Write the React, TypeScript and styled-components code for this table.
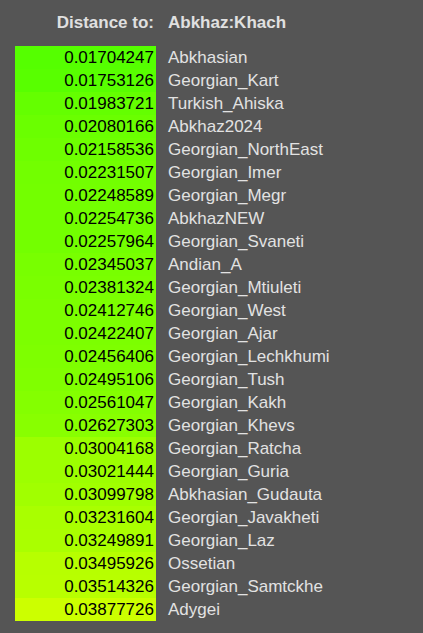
import React from "react";
import styled, { createGlobalStyle } from "styled-components";

const Global = createGlobalStyle`
  html, body { margin: 0; padding: 0; background: #555555; }
  body { font-family: "Liberation Sans", Arial, sans-serif; }
`;

const rows: [string, string][] = [
  ["0.01704247", "Abkhasian"],
  ["0.01753126", "Georgian_Kart"],
  ["0.01983721", "Turkish_Ahiska"],
  ["0.02080166", "Abkhaz2024"],
  ["0.02158536", "Georgian_NorthEast"],
  ["0.02231507", "Georgian_Imer"],
  ["0.02248589", "Georgian_Megr"],
  ["0.02254736", "AbkhazNEW"],
  ["0.02257964", "Georgian_Svaneti"],
  ["0.02345037", "Andian_A"],
  ["0.02381324", "Georgian_Mtiuleti"],
  ["0.02412746", "Georgian_West"],
  ["0.02422407", "Georgian_Ajar"],
  ["0.02456406", "Georgian_Lechkhumi"],
  ["0.02495106", "Georgian_Tush"],
  ["0.02561047", "Georgian_Kakh"],
  ["0.02627303", "Georgian_Khevs"],
  ["0.03004168", "Georgian_Ratcha"],
  ["0.03021444", "Georgian_Guria"],
  ["0.03099798", "Abkhasian_Gudauta"],
  ["0.03231604", "Georgian_Javakheti"],
  ["0.03249891", "Georgian_Laz"],
  ["0.03495926", "Ossetian"],
  ["0.03514326", "Georgian_Samtckhe"],
  ["0.03877726", "Adygei"],
];

const Page = styled.div`
  padding: 11px 0 0 15px;
  color: #e2e2e2;
  font-size: 17px;
  line-height: 23px;
`;

const Grid = styled.div`
  display: grid;
  grid-template-columns: 141px auto;
  column-gap: 12px;
  justify-content: start;
`;

const HeadCell = styled.div<{ $right?: boolean }>`
  font-weight: bold;
  text-align: ${(p) => (p.$right ? "right" : "left")};
  padding-right: ${(p) => (p.$right ? "2px" : "0")};
  margin-bottom: 12px;
  color: #e0e0e0;
`;

const ValueCell = styled.div`
  height: 23px;
  text-align: right;
  padding-right: 2px;
  color: #000;
`;

const NameCell = styled.div`
  height: 23px;
  color: #e2e2e2;
`;

function colorFor(v: number) {
  const min = 0.01704247;
  const max = 0.03877726;
  const r = Math.round(85 + ((v - min) / (max - min)) * (204 - 85));
  return `rgb(${r},255,0)`;
}

export default function App() {
  return (
    <>
      <Global />
      <Page>
        <Grid>
          <HeadCell $right>Distance to:</HeadCell>
          <HeadCell>Abkhaz:Khach</HeadCell>
          {rows.map(([v, n]) => (
            <React.Fragment key={n}>
              <ValueCell style={{ background: colorFor(parseFloat(v)) }}>{v}</ValueCell>
              <NameCell>{n}</NameCell>
            </React.Fragment>
          ))}
        </Grid>
      </Page>
    </>
  );
}
